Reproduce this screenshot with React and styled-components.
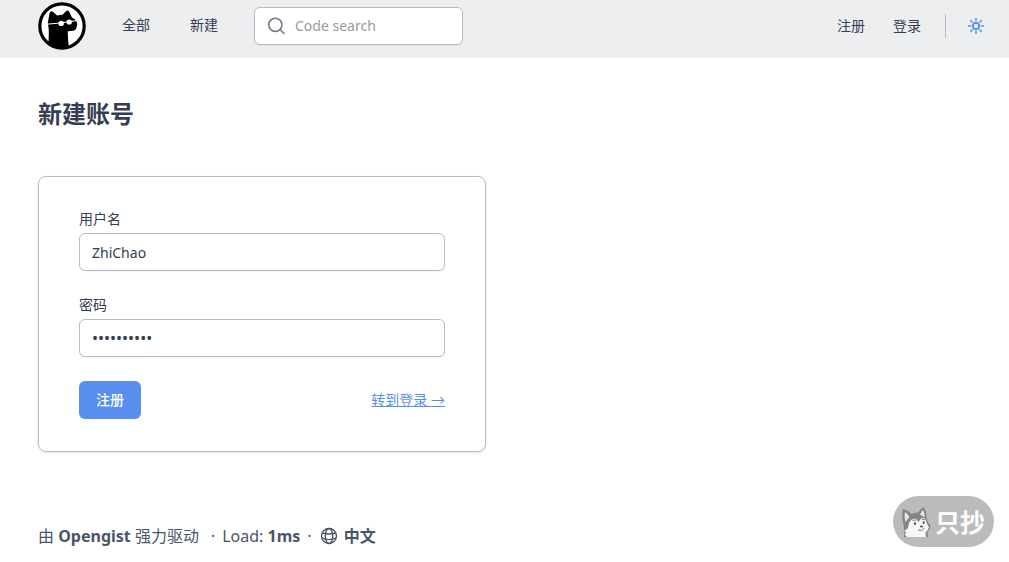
import React, {useState} from 'react';
import styled, {createGlobalStyle} from 'styled-components';

const App = () => {
  const [search, setSearch] = useState('');
  const [username, setUsername] = useState('ZhiChao');
  const [password, setPassword] = useState('opengist10');

  return (
      <>
        <GlobalStyle/>
        <Header>
          <LogoLink href="#" aria-label="Opengist">
            <Logo/>
          </LogoLink>
          <Menu>
            <NavLink href="#">全部</NavLink>
            <NavLink href="#">新建</NavLink>
          </Menu>
          <Search>
            <SearchIcon/>
            <SearchInput
                type="search"
                aria-label="Code search"
                placeholder="Code search"
                value={search}
                onChange={(e) => setSearch(e.target.value)}/>
          </Search>
          <UserMenu>
            <NavLink href="#">注册</NavLink>
            <NavLink href="#">登录</NavLink>
            <ThemeButton type="button" aria-label="Theme">
              <SunIcon/>
            </ThemeButton>
          </UserMenu>
        </Header>

        <Main>
          <Title>新建账号</Title>
          <Card onSubmit={(e) => e.preventDefault()}>
            <Field>
              <Label htmlFor="username">用户名</Label>
              <Input
                  id="username"
                  type="text"
                  value={username}
                  onChange={(e) => setUsername(e.target.value)}/>
            </Field>
            <Field>
              <Label htmlFor="password">密码</Label>
              <Input
                  id="password"
                  type="password"
                  value={password}
                  onChange={(e) => setPassword(e.target.value)}/>
            </Field>
            <Actions>
              <Submit type="submit">注册</Submit>
              <LoginLink href="#">转到登录 →</LoginLink>
            </Actions>
          </Card>
        </Main>

        <Footer>
          <Powered>由 <a href="#">Opengist</a> 强力驱动</Powered>
          <Dot>·</Dot>
          <span>Load: <b>1ms</b></span>
          <Dot>·</Dot>
          <Language type="button">
            <GlobeIcon/>
            中文
          </Language>
        </Footer>

        <Badge>
          <Husky/>
          <span>只抄</span>
        </Badge>
      </>
  );
};

const Logo = () => (
    <svg width="48" height="48" viewBox="0 0 48 48" aria-hidden="true">
      <circle cx="24" cy="24" r="22.2" fill="#fff" stroke="#000" strokeWidth="3.2"/>
      <path
          d="M9.8 21 L11.5 11.5 Q12.8 7.8 15.5 10.2 L19 13.5 Q22 13 24.5 12.8 L28 9.2 Q30 7.6 31.3 10 L34 15.5 Q38.8 17.5 39.2 22 Q39 27.5 35.5 28.8 L29.8 29.3 Q29.6 37 31 45.5 Q20 48.5 10.2 42 Q11.2 33 10.6 26 Z"
          fill="#000"/>
      <path d="M9 22.2 L23 20.9 L39 18.6" stroke="#fff" strokeWidth="1" fill="none"/>
      <ellipse cx="23.2" cy="21.4" rx="2.7" ry="2.6" fill="#fff"/>
      <ellipse cx="31.2" cy="20" rx="2.7" ry="2.6" fill="#fff"/>
    </svg>
);

const SearchIcon = () => (
    <svg width="20" height="20" viewBox="0 0 20 20" fill="none" stroke="#74778b" strokeWidth="1.6"
         strokeLinecap="round" aria-hidden="true">
      <circle cx="8.3" cy="8.8" r="6.6"/>
      <path d="M13 13.5l4 4"/>
    </svg>
);

const SunIcon = () => (
    <svg width="20" height="20" viewBox="0 0 20 20" fill="none" stroke="#588fee" strokeWidth="2" aria-hidden="true">
      <circle cx="10" cy="10" r="3.3"/>
      <path
          d="M10 2v3M10 15v3M2 10h3M15 10h3M4.3 4.3l2.1 2.1M13.6 13.6l2.1 2.1M4.3 15.7l2.1-2.1M13.6 6.4l2.1-2.1"
          strokeWidth="1.6"/>
    </svg>
);

const GlobeIcon = () => (
    <svg width="20" height="20" viewBox="0 0 24 24" fill="none" stroke="currentColor" strokeWidth="1.6"
         aria-hidden="true">
      <circle cx="12" cy="12" r="9"/>
      <ellipse cx="12" cy="12" rx="4.5" ry="9"/>
      <path d="M4 8.2 Q12 11 20 8.2M3.2 14.3 Q12 18.5 20.8 14.3"/>
    </svg>
);

const Husky = () => (
    <svg width="30" height="32" viewBox="0 0 30 32" aria-hidden="true">
      <path d="M3 31 Q4 25 2.5 19 Q.3 9 1.8 3 Q7 4 10.5 8 Q14 6 17 6.5 Q19 3 22.5 1 Q26 6 25.5 13 Q27 17 29.5 19.5 Q29 24 26.5 26 L27 31 Z"
            fill="#858585"/>
      <path d="M3.8 6 Q7.5 8 8.5 11 L4.5 16 Q3 10 3.8 6 Z" fill="#e4e4e4"/>
      <path d="M22 3.8 Q24 7.5 23.5 11.5 L19 8.5 Z" fill="#e4e4e4"/>
      <path d="M8 17 Q11 12 15 13 L17.5 16 L20 12.5 Q24 11 25 15 L26.5 19 L28 21 Q27 25 24.5 26.5 L25 31 H6 L3.5 28 L5.5 27 L3.5 25 L7 22 Z"
            fill="#f7f7f7"/>
      <ellipse cx="14" cy="17.6" rx="1.1" ry="1.5" fill="#555"/>
      <ellipse cx="22.6" cy="16.4" rx="1" ry="1.5" fill="#555"/>
      <path d="M11.5 14.8 Q13 13.4 15 14.4M20.8 13.8 Q22 12.8 23.6 13.6M17 24 Q21 26 23.5 22" fill="none" stroke="#777"/>
      <ellipse cx="20.5" cy="20.5" rx="1.6" ry="1.1" fill="#555"/>
    </svg>
);

const GlobalStyle = createGlobalStyle`
  * {
    box-sizing: border-box;
  }

  body {
    margin: 0;
    background: #fff;
    color: #343e52;
    font-family: "Noto Sans", "Noto Sans CJK SC", sans-serif;
    font-size: 14px;
    line-height: 20px;
  }

  a {
    color: inherit;
    text-decoration: none;
  }

  button, input {
    font: inherit;
    color: inherit;
  }

  svg {
    display: block;
    flex-shrink: 0;
  }
`;

const Header = styled.header`
  display: flex;
  align-items: flex-start;
  height: 58px;
  padding: 2px 23px 0 38px;
  background: #edeef0;
`;

const LogoLink = styled.a`
  margin-right: 36px;
`;

const Menu = styled.nav`
  display: flex;
  gap: 40px;
  padding-top: 13px;
  margin-right: 36px;
`;

const NavLink = styled.a`
  white-space: nowrap;
`;

const Search = styled.label`
  display: flex;
  align-items: center;
  gap: 8px;
  width: 209px;
  height: 38px;
  margin-top: 5px;
  padding: 0 12px;
  background: #fff;
  border: 1px solid #b8bbc5;
  border-radius: 6px;
  box-shadow: 0 1px 2px rgba(0, 0, 0, .05);
`;

const SearchInput = styled.input`
  flex: 1;
  min-width: 0;
  padding: 0;
  background: none;
  border: none;
  outline: none;

  &::placeholder {
    color: #969aa3;
  }
`;

const UserMenu = styled.div`
  display: flex;
  align-items: center;
  gap: 28px;
  margin-left: auto;
  padding-top: 12px;
`;

const ThemeButton = styled.button`
  display: flex;
  align-items: center;
  height: 24px;
  margin-left: -4px;
  padding: 0 0 0 20px;
  background: none;
  border: none;
  border-left: 1px solid #b8bbc5;
  cursor: pointer;
`;

const Main = styled.main`
  padding: 40px 38px 0;
`;

const Title = styled.h1`
  margin: 0 0 46px;
  font-size: 24px;
  line-height: 32px;
  font-weight: 700;
`;

const Card = styled.form`
  display: flex;
  flex-direction: column;
  gap: 24px;
  max-width: 448px;
  padding: 32px 40px;
  border: 1px solid #b8bbc5;
  border-radius: 8px;
  box-shadow: 0 1px 3px rgba(0, 0, 0, .1);
`;

const Field = styled.div`
  display: flex;
  flex-direction: column;
  gap: 4px;
`;

const Label = styled.label`
  display: block;
`;

const Input = styled.input`
  width: 100%;
  height: 38px;
  padding: 0 12px;
  background: #fff;
  border: 1px solid #b8bbc5;
  border-radius: 6px;
  box-shadow: 0 1px 2px rgba(0, 0, 0, .05);

  &[type="password"] {
    font-size: 16px;
  }
`;

const Actions = styled.div`
  display: flex;
  align-items: center;
  justify-content: space-between;
`;

const Submit = styled.button`
  height: 38px;
  padding: 0 17px;
  background: #588fee;
  color: #fff;
  font-weight: 500;
  border: none;
  border-radius: 6px;
  cursor: pointer;
`;

const LoginLink = styled.a`
  color: #588fee;
  text-decoration: underline;
`;

const Footer = styled.footer`
  display: flex;
  align-items: center;
  padding: 72px 38px 14px;
  color: #4a5668;
  font-size: 16px;
  line-height: 24px;

  a, b {
    font-weight: 700;
  }
`;

const Powered = styled.span`
  margin-right: 5px;
`;

const Dot = styled.span`
  margin: 0 7px;
`;

const Language = styled.button`
  display: flex;
  align-items: center;
  gap: 5px;
  padding: 0;
  background: none;
  border: none;
  font-weight: 700;
  cursor: pointer;
`;

const Badge = styled.div`
  position: fixed;
  right: 15px;
  bottom: 15px;
  display: flex;
  align-items: center;
  gap: 4px;
  height: 51px;
  padding: 0 9px 0 8px;
  background: #bbb;
  color: #fff;
  border-radius: 26px;
  font-size: 25px;
  font-weight: 700;
  line-height: 32px;
`;

export default App;
